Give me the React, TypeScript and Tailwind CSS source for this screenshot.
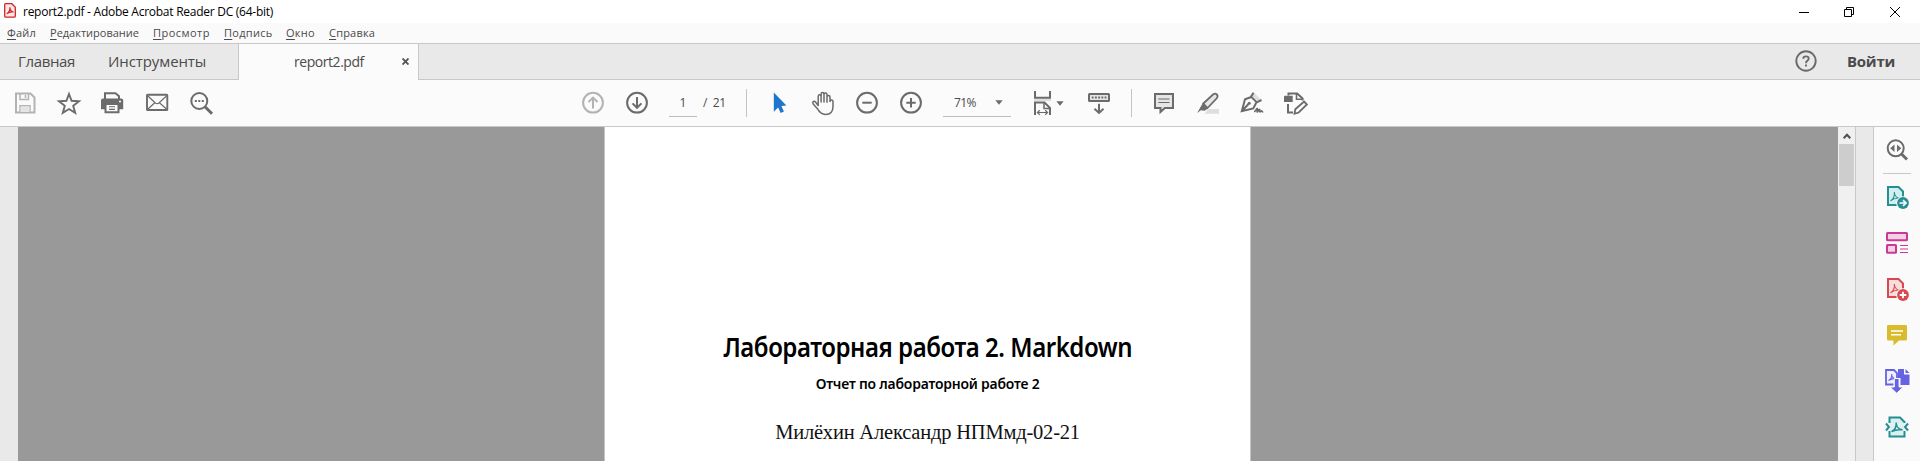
import React from "react";

type IconProps = { children: React.ReactNode; className?: string };

function Icon({ children, className = "" }: IconProps) {
  return (
    <svg
      viewBox="0 0 24 24"
      fill="none"
      stroke="currentColor"
      strokeWidth="2"
      className={`block size-6 shrink-0 overflow-visible ${className}`}
    >
      {children}
    </svg>
  );
}

const GREY = "text-[#6b6b6b]";
const TREFOIL = "M5.5 15.8C8.3 14.3 9.7 11 9.4 7M9.4 8C10 11.2 11.5 13 14.8 13.4C11.5 12.8 8.5 13.6 5.5 15.8";

function Menu({ first, rest, className }: { first: string; rest: string; className: string }) {
  return (
    <span className={`shrink-0 whitespace-nowrap ${className}`}>
      <span className="underline decoration-1 underline-offset-2">{first}</span>
      {rest}
    </span>
  );
}

function TitleBar() {
  return (
    <header className="flex h-[23px] items-center bg-white pl-1 text-black">
      <svg viewBox="0 0 12 15" className="mt-[-2px] h-[15px] w-3 shrink-0" fill="none" stroke="#d1232a">
        <path d="M1.5 .7h6.3l3.5 3.5v8.8q0 1.2-1.2 1.2H1.8q-1.1 0-1.1-1.2V1.7q0-1 .8-1Z" fill="#fde8e8" strokeWidth="1.3" />
        <path d="M2.8 10.8C5 9.8 6.2 6.5 5.9 4.3C6 7 7.2 8.9 9.6 9C7 8.6 4.5 9.2 2.8 10.8Z" strokeWidth="1.2" />
      </svg>
      <span className="ml-[7px] mt-[1px] w-[400px] whitespace-nowrap text-[12px] tracking-[-0.26px]">
        report2.pdf - Adobe Acrobat Reader DC (64-bit)
      </span>
      <div className="ml-auto mr-5 flex items-center">
        <svg className="mr-[35px] h-2.5 w-2.5" viewBox="0 0 10 10" stroke="#000"><path d="M0 5.5h10" /></svg>
        <svg className="mr-9 h-2.5 w-2.5" viewBox="0 0 10 10" stroke="#000" fill="none"><path d="M.5 2.5h7v7h-7ZM2.5 2.5v-2h7v7h-2" /></svg>
        <svg className="h-2.5 w-2.5" viewBox="0 0 10 10" stroke="#000"><path d="m0 0 10 10M10 0 0 10" /></svg>
      </div>
    </header>
  );
}

function MenuBar() {
  return (
    <nav className="flex h-5 items-center bg-[#fafafa] pl-[7px] text-[11px] text-[#4a4a4a]">
      <Menu first="Ф" rest="айл" className="w-[43px] tracking-[0.2px]" />
      <Menu first="Р" rest="едактирование" className="w-[103px]" />
      <Menu first="П" rest="росмотр" className="w-[71px] tracking-[0.45px]" />
      <Menu first="П" rest="одпись" className="w-[62px] tracking-[0.3px]" />
      <Menu first="О" rest="кно" className="w-[43px] tracking-[0.3px]" />
      <Menu first="С" rest="правка" className="w-[50px] tracking-[0.2px]" />
    </nav>
  );
}

function TabBar() {
  return (
    <div className="flex h-[37px] border-t border-[#c8c8c8] bg-[#e9e9e9] text-[#4b4b4b]">
      <div className="flex w-[238px] items-center border-b border-[#c8c8c8] pl-[18px] text-[15px]">
        <span className="w-[90px] shrink-0 whitespace-nowrap tracking-[-0.35px]">Главная</span>
        <span className="whitespace-nowrap tracking-[-0.1px]">Инструменты</span>
      </div>
      <div className="flex w-[181px] items-center border-x border-[#c8c8c8] bg-[#fbfbfb] pl-[55px]">
        <span className="mt-[-1px] w-[108px] whitespace-nowrap text-[14px] tracking-[-0.45px]">report2.pdf</span>
        <svg className="mt-[-1px] size-[7px]" viewBox="0 0 7 7" stroke="#555" strokeWidth="1.9"><path d="m.5.5 6 6m0-6-6 6" /></svg>
      </div>
      <div className="flex flex-1 items-center border-b border-[#c8c8c8]">
        <svg viewBox="0 0 22 22" className="mt-[-1px] mr-[30px] ml-auto size-[22px]" fill="none" stroke="#6b6b6b" strokeWidth="1.9">
          <circle cx="11" cy="11" r="9.7" />
          <path d="M8.3 8.7C8.3 5.6 13.7 5.6 13.7 8.7C13.7 10.7 11 10.4 11 13.2M11 14.4v2" />
        </svg>
        <span className="mr-[25px] w-[48px] whitespace-nowrap text-[15px] font-bold tracking-[-0.25px]">Войти</span>
      </div>
    </div>
  );
}

function Toolbar() {
  return (
    <div className="flex h-[47px] items-center border-b border-[#c8c8c8] bg-[#fbfbfb] pl-[13px] text-[#4b4b4b]">
      <Icon className="text-[#b3b3b3]">
        <path d="M3 2.5h14.5l4 4v15H3Z" />
        <path d="M7 2.5v6h8.5v-6M7 21.5v-6.7h10v6.7" strokeWidth="1.5" />
        <path d="M7.5 15.5h9v5.5h-9Z" fill="#e4e4e4" stroke="none" />
        <path d="M12.5 4v3" strokeWidth="1.5" />
      </Icon>
      <Icon className={`ml-5 ${GREY}`}>
        <path d="m12 3 2.6 6.8 7.4.4-5.8 4.6 2 7.1L12 18l-6.2 3.9 2-7.1L2 10.2l7.4-.4Z" strokeWidth="1.9" />
      </Icon>
      <Icon className={`ml-[19px] ${GREY}`}>
        <path d="M5 8V2.3h10.5l3.5 3V8" />
        <path d="M3 7.5h18.2q2 0 2 2v8.7h-4.7v-4.7h-13v4.7H1V9.5q0-2 2-2Z" fill="currentColor" stroke="none" />
        <path d="M5.5 13h13v8.2h-13Z" fill="#fbfbfb" />
        <path d="M9 15.8h6M9 18.4h6" strokeWidth="1.1" />
        <path d="M19 10.5h2" stroke="#fbfbfb" strokeWidth="1.3" />
      </Icon>
      <Icon className={`ml-[21px] ${GREY}`}>
        <rect x="2" y="3.8" width="20.3" height="15.2" rx=".6" strokeWidth="1.9" />
        <path d="m3 5 7.3 7q1.8 1.3 3.6 0L21.5 5M3 18l6.5-6m5.2 0 6.8 6" strokeWidth="1.2" />
      </Icon>
      <Icon className={`ml-5 ${GREY}`}>
        <circle cx="10.3" cy="10" r="8" />
        <path d="m16 15.8 7 7" strokeWidth="3" />
        <path d="M5.8 10h2M9.3 10h2M12.8 10h2" />
      </Icon>

      <Icon className="ml-[368px] text-[#b3b3b3]">
        <circle cx="12" cy="11.7" r="9.9" />
        <path d="M12 17.5V7M7.5 11 12 6.6l4.5 4.4" />
      </Icon>
      <Icon className={`ml-5 ${GREY}`}>
        <circle cx="12" cy="11.7" r="9.9" />
        <path d="M12 6v10.5M7.5 12.4l4.5 4.4 4.5-4.4" />
      </Icon>
      <div className="ml-5 flex h-7 w-7 items-center justify-center border-b border-[#bdbdbd] text-[12px]">1</div>
      <span className="ml-1.5 w-6 shrink-0 whitespace-pre text-[12px] tracking-[-0.3px]">{"/  21"}</span>
      <div className="ml-[19px] h-7 w-px bg-[#c4c4c4]" />
      <Icon className="ml-5 text-[#1f74cb]">
        <path d="M6.8 1.5v19.3l4.3-4.4 2.6 5.6 3.2-1.4-2.5-5.6 5-.4Z" fill="currentColor" stroke="none" />
      </Icon>
      <Icon className={`ml-5 ${GREY}`}>
        <path
          d="M7.2 14.5V5.4c0-2.2 2.9-2.2 2.9 0V11 3.3c0-2.3 2.9-2.3 2.9 0V11 3.6c0-2.3 3-2.3 3 0V11.2 6c0-2.1 3-2.1 3 0v4.4c0-1.8 3-1.8 3 0v5c0 5.5-3 8-7.6 8-4.2 0-6.1-2.2-8.2-6L2.2 13c-1.3-2.6 1.2-3.4 2.5-1.7Z"
          strokeWidth="1.5"
          strokeLinejoin="round"
        />
      </Icon>
      <Icon className={`ml-5 ${GREY}`}>
        <circle cx="12" cy="11.7" r="9.9" />
        <path d="M7.3 11.7h9.4" />
      </Icon>
      <Icon className={`ml-5 ${GREY}`}>
        <circle cx="12" cy="11.7" r="9.9" />
        <path d="M7.3 11.7h9.4M12 7v9.4" />
      </Icon>
      <div className="ml-5 flex h-7 w-[68px] shrink-0 items-center border-b border-[#bdbdbd] pl-[11px] text-[12px]">
        <span className="w-[41px] tracking-[-0.55px]">71%</span>
        <svg viewBox="0 0 8 5" className="h-[5px] w-2" fill="#6b6b6b"><path d="M.3.3h7.4L4 4.7Z" /></svg>
      </div>
      <Icon className={`ml-[19px] ${GREY}`}>
        <path d="M5 0v6.8h15V0" />
        <path d="M4 9h17" stroke="#d7d7d7" strokeWidth="1.6" />
        <path d="M5 24V11.6h9.5L20 17v7" />
        <path d="M14 12v5.5h5.5" strokeWidth="1.5" />
        <path d="M7.7 21.5h9.5M9.8 19.3l-2.4 2.2 2.4 2.2M15.2 19.3l2.4 2.2-2.4 2.2" strokeWidth="1.2" />
      </Icon>
      <svg viewBox="0 0 8 5" className="ml-[2px] h-[5px] w-2 shrink-0" fill="#6b6b6b"><path d="M.3.3h7.4L4 4.7Z" /></svg>
      <Icon className={`ml-[23px] ${GREY}`}>
        <rect x="2" y="3" width="20" height="7" rx=".6" fill="#e5e5e5" />
        <path d="M4.8 6.5h14.8" strokeDasharray="1.8 1.4" />
        <path d="M12 12.7v9M7.5 17.8 12 22l4.5-4.2" />
      </Icon>
      <div className="ml-5 h-7 w-px bg-[#c4c4c4]" />
      <Icon className={`ml-5 ${GREY}`}>
        <path d="M3 3h18v14h-8.2L8.5 21v-4H3Z" fill="#e5e5e5" />
        <path d="M6.3 8h11.2M6.3 11.5h11.2" strokeWidth="1.2" />
      </Icon>
      <Icon className={`ml-5 ${GREY}`}>
        <path d="M12.5 18H23v4.7H8.5Z" fill="#dedede" stroke="none" />
        <path d="M7.3 12.5 17.3 3.3q2-1.3 3.5.2t.2 3.5L11.5 17Z" fill="#e5e5e5" strokeWidth="1.8" />
        <path d="m6.8 12.3 5.3 5.1-3.5 2.3-3.7-.4L1.2 22 4.8 15.5Z" fill="currentColor" stroke="none" />
      </Icon>
      <Icon className={`ml-5 ${GREY}`}>
        <path d="m13.8 1.5 6.8 6.6-3 2.4-6-5.7Z" fill="#dedede" stroke="none" />
        <path d="m13.5 1.7-2.5 4 5.8 5.7L21.5 9M11.3 6 5 8.3 1.8 20.2l11.5-2.7 3.2-6.3M2 20l6.5-7" strokeWidth="2" />
        <circle cx="9.2" cy="12.3" r="1.5" fill="currentColor" stroke="none" />
        <path d="M14 20.8c2-.3 2.7-4 3.4-3.3s-1 3.8 0 3.4 1.7-3 2.3-2.4-.5 2.4.6 2.4 1-1.2 1.5-1 .5 1.2 1.5 1.1" strokeWidth="1.6" />
      </Icon>
      <Icon className={`ml-5 ${GREY}`}>
        <path d="M0 6q0-1.3 1.3-1.3h7.4V11H0Z" fill="currentColor" stroke="none" />
        <path d="M4.5 4.5V2.4h8.7l5.4 5v2M4 13v8.4h5" strokeWidth="2" />
        <path d="M12.5 2.5v5.7h6" strokeWidth="1.6" />
        <path d="m11.3 18.2 8.8-7.6 2.8 2.9-8.2 8-4.2 1.3Z" fill="#fbfbfb" strokeWidth="1.8" />
      </Icon>
    </div>
  );
}

function SidePanel() {
  return (
    <aside className="flex w-[47px] shrink-0 flex-col items-center border-l border-[#c8c8c8] bg-[#fafafa] pt-[11px]">
      <Icon className={GREY}>
        <circle cx="10.7" cy="10.3" r="8" />
        <path d="m16.5 16 5.5 5.5" strokeWidth="3" />
        <path d="M9.5 6.5v7.6L5.2 10.3ZM12 6.5v7.6l4.3-3.8Z" fill="currentColor" stroke="none" />
      </Icon>
      <div className="mt-[11px] h-px w-7 shrink-0 bg-[#c8c8c8]" />
      <div className="mt-[11px] flex flex-col gap-[22px]">
        <Icon className="text-[#258f92]">
          <path d="M3 2h10.5L18 6.5V20H3Z" fill="#d3eeee" />
          <path d={TREFOIL} strokeWidth="1.1" />
          <circle cx="18" cy="18" r="6.8" fill="#fafafa" stroke="none" />
          <circle cx="18" cy="18" r="5.9" fill="currentColor" stroke="none" />
          <path d="M14.5 18h5M18 15.2l3 2.8-3 2.8" stroke="#fff" strokeWidth="1.7" />
        </Icon>
        <Icon className="text-[#c93b92]">
          <rect x="2" y="2" width="20" height="7.3" rx=".5" fill="#f5cfe6" />
          <rect x="2" y="14" width="9" height="7.7" rx=".5" fill="#f5cfe6" />
          <path d="M15 14.5h8M15 18h8M15 21.5h8" strokeWidth="1.2" />
        </Icon>
        <Icon className="text-[#d7484f]">
          <path d="M3 2h10.5L18 6.5V20H3Z" fill="#fbdcdc" />
          <path d={TREFOIL} strokeWidth="1.1" />
          <circle cx="18" cy="18" r="6.8" fill="#fafafa" stroke="none" />
          <circle cx="18" cy="18" r="5.9" fill="currentColor" stroke="none" />
          <path d="M14.7 18h6.6M18 14.7v6.6" stroke="#fff" strokeWidth="1.8" />
        </Icon>
        <Icon className="text-[#dabb2e]">
          <path d="M3.3 2h17.4q1.3 0 1.3 1.3v12.9q0 1.3-1.3 1.3H14L8.5 22.5v-5H3.3Q2 17.5 2 16.2V3.3Q2 2 3.3 2Z" fill="currentColor" stroke="none" />
          <path d="M6 8h12M6 11.7h10" stroke="#fff" strokeWidth="1.5" />
        </Icon>
        <Icon className="text-[#6663e2]">
          <path d="M8.5 15.5H1V1h8l3 3v7" strokeWidth="1.8" fill="#f0effd" />
          <path d="M3.5 11.5C5.8 10.5 7 8 6.7 5M6.7 6C7.2 8.3 8.5 9.5 10.8 9.7C8 9.4 5.7 10 3.5 11.5" strokeWidth="1.1" />
          <path d="M13 0h6v5.5h5.5V16H15.5V9H13Z" fill="currentColor" stroke="none" />
          <path d="M20.5 0v4h4Z" fill="currentColor" stroke="none" />
          <path d="M9.3 9.5h4.8v8.5h4.2l-6.6 6.2L5 18h4.3Z" fill="currentColor" stroke="#fafafa" strokeWidth="1" />
        </Icon>
        <Icon className="text-[#238e93]">
          <path d="M4.5 8V2.5H15L19.5 7v1M4.5 16v5.5h15V16" fill="#d9f0ef" />
          <path d="M5 8h14v8H5Z" fill="#dff2f1" stroke="none" />
          <path d="M6.5 16.5C10 15 11.5 12 11.2 7.5M11.2 8.5C11.7 12.3 13.8 14.3 17.5 14.8C13.5 14.3 10 14.8 6.5 16.5" strokeWidth="1.5" />
          <path d="M1 8.5 4 12l-3 3.5M23 8.5 20 12l3 3.5" />
        </Icon>
      </div>
    </aside>
  );
}

function Document() {
  return (
    <main className="flex min-h-0 flex-1">
      <div className="w-[18px] shrink-0 bg-[#e9e9e9]" />
      <div className="flex flex-1 justify-start bg-[#999999] pl-[586px]">
        <article className="flex w-[647px] flex-col items-center border-x border-[#c4c4c4] bg-white text-black">
          <h1 className="mt-[201px] h-[38px] origin-center scale-x-[0.889] whitespace-nowrap font-['Noto_Sans'] text-[27px] leading-[38px] font-semibold tracking-[-0.5px]">
            Лабораторная работа 2. Markdown
          </h1>
          <h2 className="mt-[7px] h-5 origin-center scale-x-[0.96] whitespace-nowrap font-['Noto_Sans'] text-[14.5px] leading-5 font-semibold tracking-[-0.2px]">
            Отчет по лабораторной работе 2
          </h2>
          <p className="mt-[25px] h-7 whitespace-nowrap font-['Liberation_Serif'] text-[20.5px] leading-7 tracking-[-0.2px] text-[#111]">
            Милёхин Александр НПМмд-02-21
          </p>
        </article>
      </div>
      <div className="w-[17px] shrink-0 bg-[#f0f0f0]">
        <div className="flex h-[17px] items-center justify-center">
          <svg viewBox="0 0 8 6" className="h-1.5 w-2" fill="none" stroke="#4f4f4f" strokeWidth="2"><path d="M.7 5.2 4 1.7l3.3 3.5" /></svg>
        </div>
        <div className="ml-px h-[42px] w-[15px] bg-[#cdcdcd]" />
      </div>
      <div className="w-[18px] shrink-0 border-l border-[#c8c8c8] bg-[#e9e9e9]" />
      <SidePanel />
    </main>
  );
}

export default function App() {
  return (
    <div className="flex h-[461px] w-[1920px] flex-col overflow-hidden bg-[#fafafa] font-['Open_Sans','Noto_Sans',sans-serif]">
      <TitleBar />
      <MenuBar />
      <TabBar />
      <Toolbar />
      <Document />
    </div>
  );
}
